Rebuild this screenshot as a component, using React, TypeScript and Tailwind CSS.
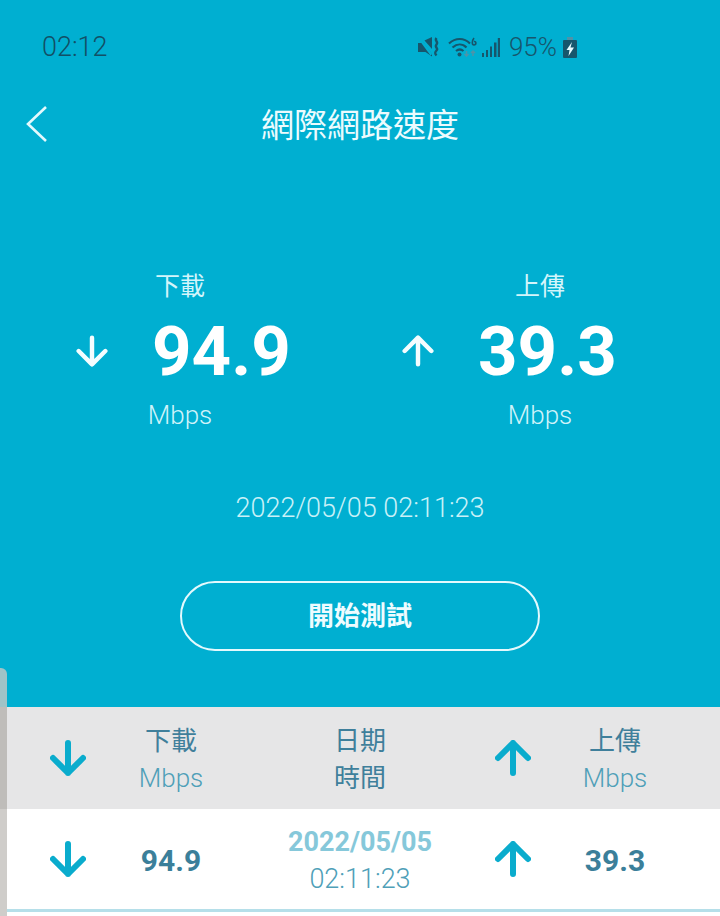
import type { ReactNode } from "react"

const font = "font-['Roboto','Noto_Sans_CJK_TC',sans-serif]"

const Arrow = ({ up, width, className }: { up?: boolean; width: number; className: string }) => (
  <svg viewBox="0 0 36 36" fill="none" stroke="currentColor" strokeWidth={width} strokeLinecap="round" strokeLinejoin="round" className={className}>
    {up ? <path d="M18 33V3M3 18L18 3l15 15" /> : <path d="M18 3v30M3 18l15 15 15-15" />}
  </svg>
)

const StatusIcons = () => (
  <div className="flex items-center text-[#17566c]">
    <svg viewBox="0 0 22 20" className="w-[22px] h-[20px]" fill="currentColor">
      <path d="M0 6h4l1-1 9 12v2.500L7.500 15H0z" />
      <path d="M6.500 3.500L14 0v12z" />
      <path d="M0 1.500L1.800 0l12.500 17-1.800 1.500z" fill="#00afd1" />
      <path d="M18.500 1c-2.500 3 2.500 3.500 0 6.500s2.500 3.500 0 6-1 3.500 0 5" fill="none" stroke="currentColor" strokeWidth="2.400" />
    </svg>
    <svg viewBox="0 0 29 20" className="ml-[8px] w-[29px] h-[20px]" fill="none" stroke="currentColor" strokeWidth="2.200">
      <path d="M1 6.500c6.500-6 15-6 21 0M4.500 10.500c4.500-4 10-4 14 0M8 14c2.500-2 5-2 7.500 0" />
      <circle cx="11.500" cy="17.500" r="2" fill="currentColor" stroke="none" />
      <path d="M18.500 14v5M16.500 17l2 2 2-2M25 19v-5M23 16l2-2 2 2" stroke="#4f93a8" strokeWidth="1.500" />
      <path d="M26 1c-2 2.500-2.500 7 0 7s2.500-4 0-3.500" strokeWidth="1.600" />
    </svg>
    <svg viewBox="0 0 18 19" className="ml-[5px] w-[18px] h-[19px]" fill="currentColor">
      <rect x="0" y="15" width="2" height="4" />
      <rect x="4" y="12" width="2" height="7" />
      <rect x="8" y="8.500" width="2" height="10.500" />
      <rect x="12" y="4.500" width="2.500" height="14.500" />
      <rect x="15.800" y="0" width="2.200" height="19" />
    </svg>
    <span className="ml-[9px] text-[26px] leading-none font-light">95%</span>
    <svg viewBox="0 0 14 21" className="ml-[6px] w-[14px] h-[21px]">
      <rect x="4" y="0" width="6" height="3" fill="#4f93a8" />
      <rect x="0" y="3" width="14" height="18" rx="1" fill="currentColor" />
      <path d="M9 5L3.500 13h3l-1 6 5.500-8.500H7.500z" fill="#e8fbff" />
    </svg>
  </div>
)

const Stat = ({ label, value, up, pad }: { label: string; value: string; up?: boolean; pad: string }) => (
  <div className="flex flex-col items-center">
    <div className="text-[25px] leading-[30px] text-[#d3f5fb]">{label}</div>
    <div className={`w-full flex items-center h-[98px] ${pad}`}>
      <Arrow up={up} width={5} className="w-[32px] h-[32px] text-[#f4fdff]" />
      <span className="ml-[44px] text-[69px] leading-none font-bold text-white">{value}</span>
    </div>
    <div className="text-[26px] leading-[30px] text-[#cff3fa] font-light">Mbps</div>
  </div>
)

const Row = ({ gray, children }: { gray?: boolean; children: ReactNode }) => (
  <div className={`grid grid-cols-[136px_70px_274px_66px_138px] items-center ${gray ? "h-[102px] bg-[#e6e6e7]" : "h-[100px] bg-white"}`}>
    {children}
  </div>
)

const TableArrow = ({ up }: { up?: boolean }) => (
  <Arrow up={up} width={6} className="w-[36px] h-[36px] justify-self-center text-[#0aaccd]" />
)

const HeadCell = ({ label }: { label: string }) => (
  <div className="pt-[4px] text-center whitespace-nowrap text-[26px] leading-[37px]">
    <div className="text-[#3f7f9b]">{label}</div>
    <div className="font-light text-[#4f9fb8]">Mbps</div>
  </div>
)

export default function App() {
  return (
    <div className={`relative w-[720px] h-[916px] overflow-hidden bg-[#00afd1] ${font}`}>
      <div className="h-[96px] pb-[2px] pl-[42px] pr-[143px] flex items-center justify-between">
        <span className="text-[27px] text-[#124f66] font-light">02:12</span>
        <StatusIcons />
      </div>

      <div className="relative h-[60px] flex items-center justify-center">
        <svg viewBox="0 0 21 36" fill="none" stroke="#e4f9fd" strokeWidth="2.600" className="absolute left-[26px] top-[10px] w-[21px] h-[36px]">
          <path d="M20 1L2 18l18 17" />
        </svg>
        <h1 className="text-[33px] font-normal text-[#ecfbfe]">網際網路速度</h1>
      </div>

      <div className="mt-[116px] grid grid-cols-2">
        <Stat label="下載" value="94.9" pad="pl-[76px]" />
        <Stat label="上傳" value="39.3" up pad="pl-[42px]" />
      </div>

      <div className="mt-[62px] text-center text-[27px] leading-[32px] font-light text-[#c9f1f8]">2022/05/05 02:11:23</div>

      <div className="mt-[57px] flex justify-center">
        <button className="w-[360px] h-[70px] rounded-full border-2 border-[#e4f9fd] text-[26px] font-bold text-[#eefcff]">開始測試</button>
      </div>

      <div className="mt-[56px] bg-white">
        <Row gray>
          <TableArrow />
          <HeadCell label="下載" />
          <div className="pl-[34px] pt-[4px] text-center text-[26px] leading-[37px] text-[#3f7f9b]">
            <div>日期</div>
            <div>時間</div>
          </div>
          <TableArrow up />
          <HeadCell label="上傳" />
        </Row>
        <Row>
          <TableArrow />
          <div className="pt-[2px] text-center whitespace-nowrap text-[30px] font-bold text-[#3b7f9a]">94.9</div>
          <div className="pl-[34px] pt-[4px] text-center whitespace-nowrap leading-[37px] text-[27px]">
            <div className="font-bold text-[#86c8da]">2022/05/05</div>
            <div className="font-light text-[#4f9fb8]">02:11:23</div>
          </div>
          <TableArrow up />
          <div className="pt-[2px] text-center whitespace-nowrap text-[30px] font-bold text-[#3b7f9a]">39.3</div>
        </Row>
        <div className="h-[3px] bg-[#b5dfe9]" />
        <div className="h-[20px]" />
      </div>

      <div className="absolute left-0 top-[668px] bottom-0 w-[7px] flex flex-col">
        <div className="h-[39px] rounded-tr-[6px] bg-[#9fc3c7]" />
        <div className="h-[102px] bg-[#bfbdba]" />
        <div className="flex-1 bg-[#cfcdca]" />
      </div>
    </div>
  )
}
